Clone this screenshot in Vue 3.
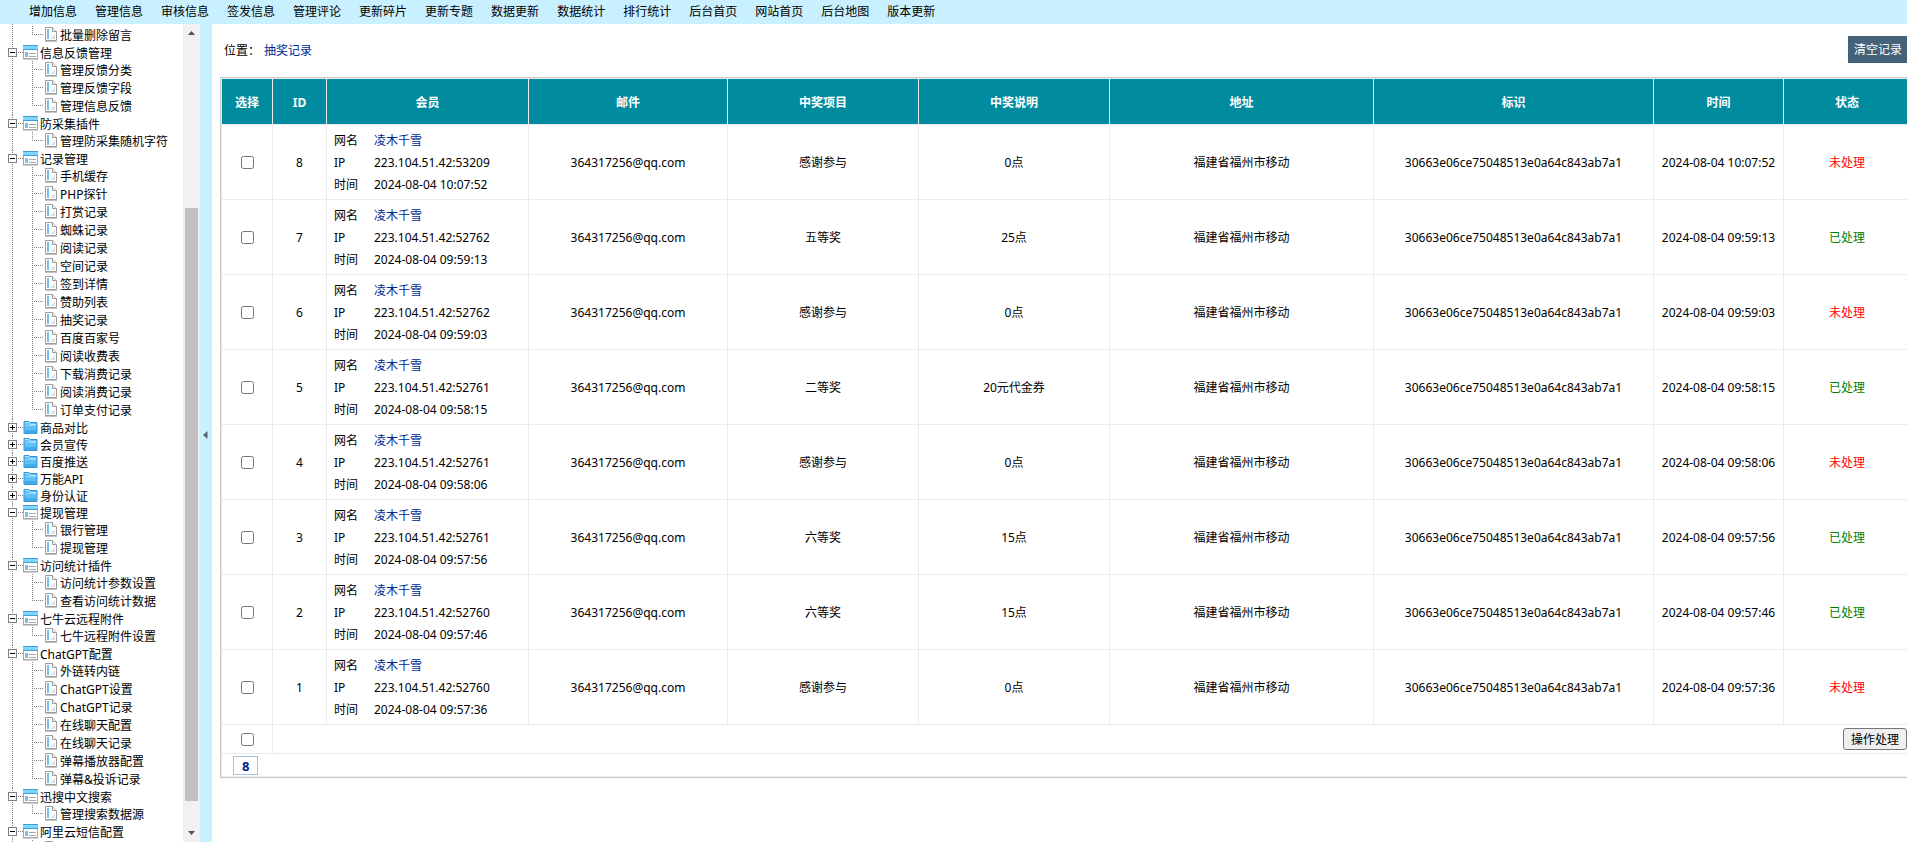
<script setup>
import { ref } from 'vue'

const nav = ['增加信息', '管理信息', '审核信息', '签发信息', '管理评论', '更新碎片', '更新专题', '数据更新', '数据统计', '排行统计', '后台首页', '网站首页', '后台地图', '版本更新']

const groups = [
  { name: '', items: ['批量删除留言'] },
  { name: '信息反馈管理', items: ['管理反馈分类', '管理反馈字段', '管理信息反馈'] },
  { name: '防采集插件', items: ['管理防采集随机字符'] },
  { name: '记录管理', items: ['手机缓存', 'PHP探针', '打赏记录', '蜘蛛记录', '阅读记录', '空间记录', '签到详情', '赞助列表', '抽奖记录', '百度百家号', '阅读收费表', '下载消费记录', '阅读消费记录', '订单支付记录'] },
  { name: '商品对比', items: [] },
  { name: '会员宣传', items: [] },
  { name: '百度推送', items: [] },
  { name: '万能API', items: [] },
  { name: '身份认证', items: [] },
  { name: '提现管理', items: ['银行管理', '提现管理'] },
  { name: '访问统计插件', items: ['访问统计参数设置', '查看访问统计数据'] },
  { name: '七牛云远程附件', items: ['七牛远程附件设置'] },
  { name: 'ChatGPT配置', items: ['外链转内链', 'ChatGPT设置', 'ChatGPT记录', '在线聊天配置', '在线聊天记录', '弹幕播放器配置', '弹幕&投诉记录'] },
  { name: '迅搜中文搜索', items: ['管理搜索数据源'] },
  { name: '阿里云短信配置', items: [''] },
]

const columns = [
  { name: '选择', cls: 'c-pick' },
  { name: 'ID', cls: 'c-id' },
  { name: '会员', cls: 'c-member' },
  { name: '邮件', cls: 'c-mail' },
  { name: '中奖项目', cls: 'c-prize' },
  { name: '中奖说明', cls: 'c-prize' },
  { name: '地址', cls: 'c-addr' },
  { name: '标识', cls: 'c-key' },
  { name: '时间', cls: 'c-time' },
  { name: '状态', cls: 'c-state' },
]

const records = [
  { id: 8, port: '53209', time: '10:07:52', prize: '感谢参与', note: '0点', done: false },
  { id: 7, port: '52762', time: '09:59:13', prize: '五等奖', note: '25点', done: true },
  { id: 6, port: '52762', time: '09:59:03', prize: '感谢参与', note: '0点', done: false },
  { id: 5, port: '52761', time: '09:58:15', prize: '二等奖', note: '20元代金券', done: true },
  { id: 4, port: '52761', time: '09:58:06', prize: '感谢参与', note: '0点', done: false },
  { id: 3, port: '52761', time: '09:57:56', prize: '六等奖', note: '15点', done: true },
  { id: 2, port: '52760', time: '09:57:46', prize: '六等奖', note: '15点', done: true },
  { id: 1, port: '52760', time: '09:57:36', prize: '感谢参与', note: '0点', done: false },
]

const picked = ref([])
const toggleAll = (e) => {
  picked.value = e.target.checked ? records.map((r) => r.id) : []
}
</script>

<template>
  <div class="page">
    <nav class="topnav">
      <a v-for="n in nav" :key="n" href="#">{{ n }}</a>
    </nav>
    <div class="body">
      <aside class="side">
        <ul class="tree">
          <li v-for="(g, i) in groups" :key="i" class="group">
            <div v-if="g.name" class="node">
              <svg class="toggle" width="17" height="17" viewBox="0 0 17 17" aria-hidden="true">
                <rect x="2.500" y="4.500" width="8" height="8" fill="#fff" stroke="#808080" />
                <path d="M4 8.500h5" stroke="#000" />
                <path v-if="!g.items.length" d="M6.500 6v5" stroke="#000" />
                <path d="M12 8.500h5" stroke="#808080" stroke-dasharray="1 1" />
              </svg>
              <svg v-if="g.items.length" width="15" height="17" viewBox="0 0 15 17" aria-hidden="true">
                <rect x=".5" y="1.500" width="14" height="13" fill="#fff" stroke="#a8a8a8" />
                <path d="M0 15.500h15" stroke="#d0d0d0" />
                <rect x="0" y="1" width="15" height="4" fill="#7fd6ff" />
                <path d="M0 1.500h15M0 5.500h15" stroke="#3a9fd8" />
                <rect x="2" y="8" width="3" height="5" fill="#7cc0e8" />
                <path d="M6 9.500h7M6 12.500h7" stroke="#a8a8a8" />
              </svg>
              <svg v-else width="15" height="17" viewBox="0 0 15 17" aria-hidden="true">
                <path d="M1 2.500h5l1 1h7v11H1z" fill="#5fc0f7" stroke="#3296d6" />
                <path d="M2 3.500h3.500l1.500 2h6" fill="none" stroke="#b5e6ff" />
                <path d="M2 6.500h11" stroke="#8fd6fc" />
                <path d="M2 12.500h11" stroke="#42ace9" stroke-width="3" />
              </svg>
              <a href="#">{{ g.name }}</a>
            </div>
            <ul v-if="g.items.length" class="leaves">
              <li v-for="(t, j) in g.items" :key="j" class="leaf">
                <svg width="12" height="16" viewBox="0 0 12 16" aria-hidden="true">
                  <path d="M.5 .5h7l4 4v9H.5z" fill="#fff" stroke="#9c9c9c" />
                  <path d="M7.500 .5v4h4" fill="#f2f2f2" stroke="#9c9c9c" />
                  <path d="M2 2h2v10H2z" fill="#74c0ea" />
                  <path d="M5 12l5-5v5z" fill="#dfe3e8" />
                  <path d="M0 14.500h12" stroke="#c4c4c4" />
                </svg>
                <a v-if="t" href="#">{{ t }}</a>
              </li>
            </ul>
          </li>
        </ul>
        <div class="scroll" aria-hidden="true">
          <svg width="17" height="17" viewBox="0 0 17 17"><path d="M5 11l3.500-4L12 11z" fill="#505050" /></svg>
          <div class="rail"><div class="thumb"></div></div>
          <svg width="17" height="17" viewBox="0 0 17 17"><path d="M5 6l3.500 4L12 6z" fill="#505050" /></svg>
        </div>
      </aside>
      <button class="split" type="button" aria-label="收起">
        <svg width="5" height="8" viewBox="0 0 5 8"><path d="M4.500 0v8L0 4z" fill="#5c6370" /></svg>
      </button>
      <main class="main">
        <header class="crumb">
          <p>位置：<a href="#">抽奖记录</a></p>
          <button class="clear" type="button">清空记录</button>
        </header>
        <div class="frame">
          <table class="grid">
            <colgroup>
              <col v-for="c in columns" :key="c.name" :class="c.cls">
            </colgroup>
            <thead>
              <tr><th v-for="c in columns" :key="c.name" scope="col">{{ c.name }}</th></tr>
            </thead>
            <tbody>
              <tr v-for="r in records" :key="r.id">
                <td class="tick"><input v-model="picked" type="checkbox" :value="r.id" :aria-label="'选择 ' + r.id"></td>
                <td>{{ r.id }}</td>
                <td class="who">
                  <dl class="member">
                    <dt>网名</dt><dd><a href="#">凌木千雪</a></dd>
                    <dt>IP</dt><dd>223.104.51.42:{{ r.port }}</dd>
                    <dt>时间</dt><dd>2024-08-04 {{ r.time }}</dd>
                  </dl>
                </td>
                <td>364317256@qq.com</td>
                <td>{{ r.prize }}</td>
                <td>{{ r.note }}</td>
                <td>福建省福州市移动</td>
                <td>30663e06ce75048513e0a64c843ab7a1</td>
                <td>2024-08-04 {{ r.time }}</td>
                <td :class="r.done ? 'done' : 'todo'">{{ r.done ? '已处理' : '未处理' }}</td>
              </tr>
            </tbody>
            <tfoot>
              <tr class="actions">
                <td class="tick"><input type="checkbox" aria-label="全选" @change="toggleAll"></td>
                <td colspan="9"><div class="right"><button class="handle" type="button">操作处理</button></div></td>
              </tr>
              <tr class="pager">
                <td colspan="10"><div class="left"><b>8</b></div></td>
              </tr>
            </tfoot>
          </table>
        </div>
      </main>
    </div>
  </div>
</template>

<style>
body {
  margin: 0;
  overflow: hidden;
}
</style>

<style scoped>
.page {
  display: flex;
  flex-direction: column;
  height: 100vh;
  overflow: hidden;
  background: #fff;
  color: #000;
  font: 12px/18px "Noto Sans", "Noto Sans CJK SC", sans-serif;
}
a {
  color: inherit;
  text-decoration: none;
}
ul,
dl,
dd,
p {
  margin: 0;
  padding: 0;
  list-style: none;
}
button {
  font: inherit;
}
.topnav {
  display: flex;
  flex: none;
  gap: 18px;
  padding: 3px 29px;
  background: #c9f0ff;
  white-space: nowrap;
}
.body {
  display: flex;
  flex: 1;
  min-height: 0;
}
.side {
  display: flex;
  flex: none;
  width: 200px;
}
.tree {
  flex: 1;
  min-width: 0;
  overflow: hidden;
  white-space: nowrap;
}
.group {
  padding-left: 6px;
  background: repeating-linear-gradient(#808080 0 1px, transparent 1px 2px) 12px 0 / 1px 100% no-repeat;
}
.group:first-child {
  padding-top: 2px;
}
.node {
  display: flex;
  align-items: center;
  height: 17px;
}
.node a {
  margin-left: 2px;
  line-height: 20px;
}
.node a,
.leaf a {
  padding-top: 2px;
}
.node svg,
.leaf svg {
  flex: none;
}
.leaves {
  margin-left: 26px;
}
.leaf {
  display: flex;
  align-items: center;
  height: 18px;
  padding-left: 13px;
  background:
    repeating-linear-gradient(#808080 0 1px, transparent 1px 2px) 0 0 / 1px 100% no-repeat,
    repeating-linear-gradient(90deg, #808080 0 1px, transparent 1px 2px) 0 8px / 12px 1px no-repeat;
}
.leaf:last-child {
  background-size: 1px 9px, 12px 1px;
}
.leaf a {
  margin-left: 3px;
}
.scroll {
  display: flex;
  flex: none;
  flex-direction: column;
  width: 17px;
  background: #f1f1f1;
}
.rail {
  display: flex;
  flex: 1;
  flex-direction: column;
  justify-content: flex-end;
  padding: 0 2px 24px;
}
.thumb {
  height: 78%;
  background: #c1c1c1;
}
.split {
  display: flex;
  flex: none;
  align-items: center;
  width: 12px;
  padding: 4px 0 0 3px;
  border: 0;
  background: #c9f0ff;
}
.main {
  flex: 1;
  min-width: 0;
  padding-left: 8px;
  overflow: hidden;
}
.crumb {
  display: flex;
  align-items: center;
  justify-content: space-between;
  padding: 12px 0 14px 4px;
}
.crumb p {
  padding-top: 2px;
}
.crumb a,
.member a {
  color: #00278f;
}
.crumb a {
  margin-left: 4px;
}
.clear {
  margin-right: -1px;
  padding: 5px 6px 4px;
  border: 0;
  background: #44637b;
  color: #fff;
}
.frame {
  margin-right: -5px;
  border: 1px solid #c8c8c8;
}
.grid {
  width: 100%;
  border-collapse: collapse;
  table-layout: fixed;
  text-align: center;
}
.c-pick { width: 51px; }
.c-id { width: 54px; }
.c-member { width: 202px; }
.c-mail { width: 199px; }
.c-prize { width: 191px; }
.c-addr { width: 264px; }
.c-key { width: 280px; }
.c-time { width: 130px; }
.c-state { width: 127px; }
.grid th,
.grid td {
  padding: 2px 0 0;
  border: 1px solid #ececec;
}
.grid th {
  height: 43px;
  background: #008c9e;
  color: #fff;
}
.grid .tick,
.grid .who,
.actions td,
.pager td {
  padding: 0;
}
.grid input {
  display: block;
  width: 13px;
  height: 13px;
  margin: 0 auto;
}
.member {
  display: grid;
  grid-template-columns: 40px 1fr;
  padding: 5px 7px 3px;
  line-height: 22px;
  text-align: left;
}
.todo {
  color: #f00;
}
.done {
  color: #008000;
}
.grid .actions td {
  height: 28px;
  padding: 0;
}
.right {
  display: flex;
  justify-content: flex-end;
  padding-right: 3px;
}
.handle {
  padding: 2px 7px 0;
  border: 1px solid #767676;
  border-radius: 3px;
  background: #efefef;
  color: #000;
}
.grid .pager td {
  height: 22px;
  padding: 0;
}
.left {
  display: flex;
  padding-left: 11px;
}
.left b {
  padding: 1px 8px 0;
  border: 1px solid #a0c6e4;
  color: #00278f;
  font-size: 13px;
  line-height: 16px;
}
</style>
